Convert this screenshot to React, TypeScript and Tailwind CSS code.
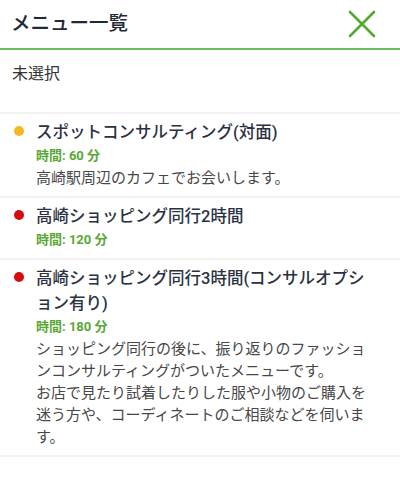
import React from 'react';

const menus = [
  {
    id: 1,
    name: 'スポットコンサルティング(対面)',
    minutes: 60,
    dot: 'bg-[#f6b81e]',
    description: ['高崎駅周辺のカフェでお会いします。'],
  },
  {
    id: 2,
    name: '高崎ショッピング同行2時間',
    minutes: 120,
    dot: 'bg-[#d50c0c]',
    description: [],
  },
  {
    id: 3,
    name: '高崎ショッピング同行3時間(コンサルオプション有り)',
    minutes: 180,
    dot: 'bg-[#d50c0c]',
    description: [
      'ショッピング同行の後に、振り返りのファッションコンサルティングがついたメニューです。',
      'お店で見たり試着したりした服や小物のご購入を迷う方や、コーディネートのご相談などを伺います。',
    ],
  },
];

function CloseIcon() {
  return (
    <svg width="28" height="28" viewBox="0 0 28 28" fill="none">
      <path d="M2 2 L26 26 M26 2 L2 26" stroke="#56a832" strokeWidth="2.6" strokeLinecap="round" />
    </svg>
  );
}

export default function App() {
  return (
    <div className="w-[400px] h-[484px] bg-white font-['Roboto','Noto_Sans_CJK_JP',sans-serif] overflow-hidden">
      <div className="h-[50px] flex items-center justify-between pl-[11px] pr-[24px] border-b-2 border-[#6cbd5c]">
        <h1 className="text-[19.5px] font-medium text-[#1f2937]">メニュー一覧</h1>
        <CloseIcon />
      </div>

      <div className="h-[64px] pl-[12px] pt-[12px] border-b-2 border-[#f1f1f1]">
        <span className="text-[16px] leading-[22px] text-[#333]">未選択</span>
      </div>

      {menus.map((menu) => (
        <div key={menu.id} className="flex pl-[14px] pr-[24px] pt-[6px] pb-[7px] border-b-2 border-[#f1f1f1]">
          <div className="w-[22px] h-[21px] shrink-0 flex items-center">
            <span className={`w-[10px] h-[10px] rounded-full ${menu.dot}`} />
          </div>
          <div className="flex-1">
            <h3 className="text-[16.5px] leading-[25px] font-medium text-[#2a3242]">{menu.name}</h3>
            <p className="text-[13px] leading-[22px] font-bold text-[#5aa834]">時間: {menu.minutes} 分</p>
            {menu.description.map((line, i) => (
              <p key={i} className="text-[15px] leading-[22px] text-[#474747]">{line}</p>
            ))}
          </div>
        </div>
      ))}
    </div>
  );
}
